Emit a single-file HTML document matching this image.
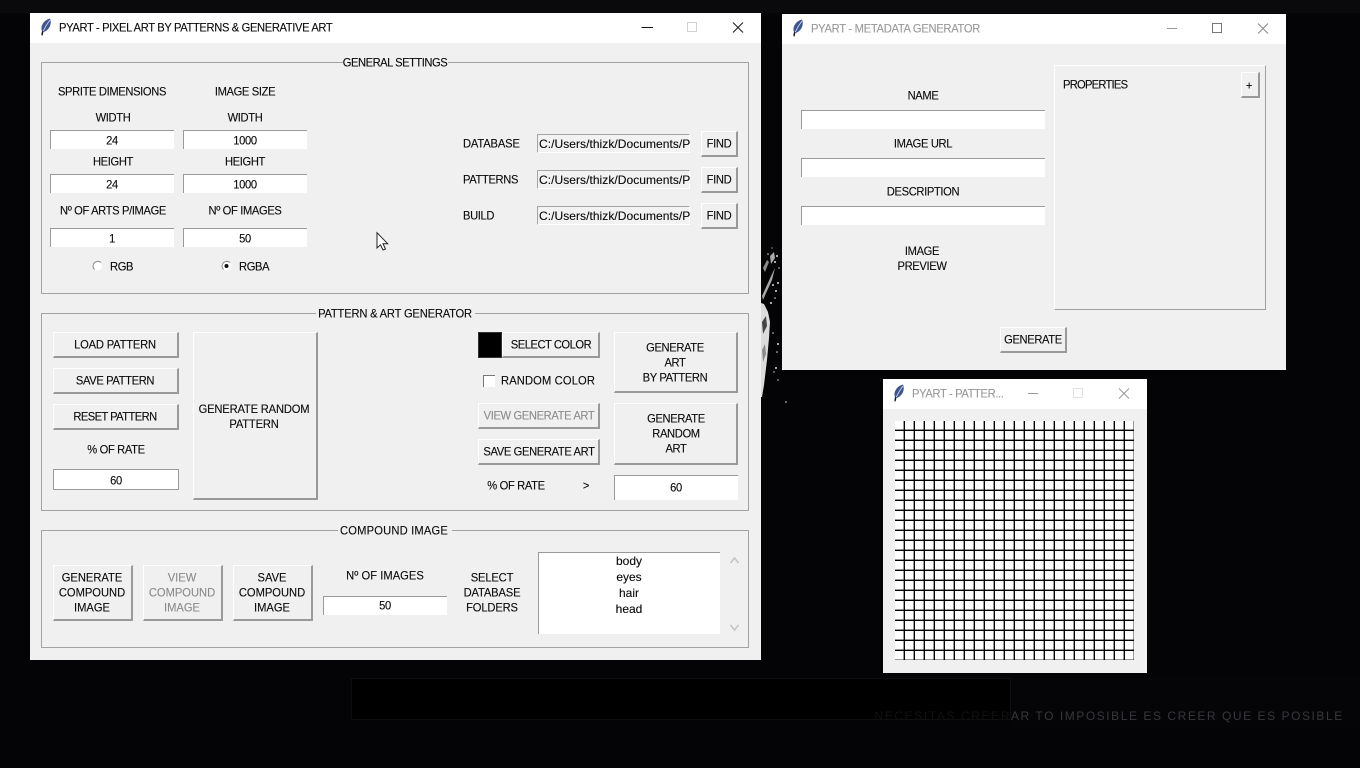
<!DOCTYPE html>
<html><head><meta charset="utf-8"><title>PYART</title>
<style>
html,body{margin:0;padding:0;width:1360px;height:768px;overflow:hidden;background:#040406}
*{box-sizing:border-box}
body{position:relative;font-family:"Liberation Sans",sans-serif;font-size:12px;color:#0a0a0a;-webkit-text-stroke:.12px currentColor}
.a{position:absolute}
.win{position:absolute;background:#f0f0f0}
.bar{position:absolute;left:0;top:0;right:0;height:30px;background:#fff}
.c{position:absolute;margin-top:1px;transform:translate(-50%,-50%) scaleX(.93);white-space:nowrap;letter-spacing:-.38px;line-height:15px;text-align:center}
.n{position:absolute;margin-top:1px;transform:translate(-50%,-50%);white-space:nowrap;line-height:16px;text-align:center}
.l{position:absolute;margin-top:1px;transform-origin:0 50%;transform:translateY(-50%) scaleX(.93);white-space:nowrap;letter-spacing:-.38px;line-height:15px}
.g{color:#8c8c8c}
.grp{position:absolute;border:1px solid #a2a2a2}
.lab{position:absolute;background:#f0f0f0;height:14px}
.e{position:absolute;background:#fff;border-top:1px solid #9a9a9a;border-left:1px solid #9a9a9a}
.p{position:absolute;background:#f2f2f2;border-top:1px solid #a5a5a5;border-left:1px solid #a5a5a5;border-right:1px solid #fff;border-bottom:1px solid #fff}
.b{position:absolute;background:#f0f0f0;border-top:1px solid #fff;border-left:1px solid #fff;border-right:2px solid #999;border-bottom:2px solid #999}
svg{position:absolute;overflow:visible}
</style></head><body>

<!-- background -->
<div class="a" style="left:0;top:0;width:1360px;height:13px;background:#0a0a0c"></div>
<div class="a" style="left:1011px;top:678px;width:349px;height:50px;background:#050508"></div>
<div class="a" style="left:351px;top:678px;width:660px;height:42px;background:#000;border:1px solid #0e0e10"></div>
<svg style="left:0;top:0" width="1360" height="768">
<g fill="#dcdcdc">
<path d="M761 303 L764 304 L768 312 L770 322 L769 338 L767 360 L764 385 L762 397 L761 397Z"/>
<path d="M762 296 L767 285 L773 272 L775 268 L772 280 L767 291 L763 300Z" fill="#a8a8a8"/>
<path d="M763 268 L767 260 L769 262 L765 272Z" fill="#8a8a8a"/>
<path d="M770 256 L774 252 L775 258 L771 264Z" fill="#aaa"/>
<circle cx="777" cy="256" r="1"/><circle cx="775" cy="262" r="1"/><circle cx="778" cy="283" r="1"/><circle cx="776" cy="291" r="1"/>
<circle cx="768" cy="254" r=".8"/><circle cx="772" cy="248" r=".6"/><circle cx="779" cy="268" r=".7"/><circle cx="773" cy="285" r="1"/><circle cx="775" cy="298" r=".8"/><circle cx="771" cy="303" r="1"/>
<circle cx="778" cy="344" r="1"/><circle cx="777" cy="352" r=".8"/><circle cx="776" cy="368" r="1"/><circle cx="786" cy="402" r=".8"/><circle cx="778" cy="380" r=".7"/><circle cx="773" cy="333" r=".8"/><circle cx="774" cy="372" r=".7"/>
</g>
<path d="M762 322 L766 316 L767 326 L763 334Z" fill="#444"/>
<path d="M762 350 L765 344 L766 354 L763 362Z" fill="#888"/>
</svg>
<div class="a" style="left:1011px;top:709px;white-space:nowrap;font-size:12px;letter-spacing:1.55px;color:#38383c;line-height:14px;-webkit-text-stroke:0">AR TO IMPOSIBLE ES CREER QUE ES POSIBLE</div>
<div class="a" style="right:349px;top:709px;white-space:nowrap;font-size:12px;letter-spacing:1.6px;color:#121214;line-height:14px;-webkit-text-stroke:0">NECESITAS CREER</div>

<!-- WINDOW 1 -->
<div class="win" style="left:30px;top:13px;width:731px;height:647px"><div class="bar"></div></div>
<svg style="left:39px;top:18px" width="14" height="18" viewBox="0 0 14 18"><path d="M2 17 L3 13 C1 8 5 2 11 .5 C13 5 11 11 6 13.5 L4 14Z" fill="#3f5590"/><path d="M4 14 C6 9 8 6 11 2" stroke="#d0d8ea" stroke-width=".9" fill="none"/><path d="M3 17.4L4 13" stroke="#111" stroke-width="1.2"/></svg>
<div class="l" style="left:59px;top:27px">PYART - PIXEL ART BY PATTERNS &amp; GENERATIVE ART</div>
<svg style="left:0;top:0" width="1360" height="60"><path d="M641.5 27.5H653" stroke="#111" stroke-width="1"/><rect x="687.5" y="22.5" width="9" height="9" fill="none" stroke="#d0d0d0"/><path d="M733 22.5L743 32.5M743 22.5L733 32.5" stroke="#222" stroke-width="1.1"/></svg>

<div class="grp" style="left:41px;top:62px;width:708px;height:232px"></div>
<div class="lab" style="left:343px;top:55px;width:105px"></div>
<div class="c" style="left:395px;top:62px;letter-spacing:-.5px">GENERAL SETTINGS</div>
<div class="c" style="left:112px;top:91px">SPRITE DIMENSIONS</div>
<div class="c" style="left:245px;top:91px">IMAGE SIZE</div>
<div class="c" style="left:113px;top:117px">WIDTH</div>
<div class="c" style="left:245px;top:117px">WIDTH</div>
<div class="e" style="left:50px;top:130px;width:124px;height:19px"></div><div class="c" style="left:112px;top:140px">24</div>
<div class="e" style="left:183px;top:130px;width:124px;height:19px"></div><div class="c" style="left:245px;top:140px">1000</div>
<div class="c" style="left:113px;top:161px">HEIGHT</div>
<div class="c" style="left:245px;top:161px">HEIGHT</div>
<div class="e" style="left:50px;top:174px;width:124px;height:19px"></div><div class="c" style="left:112px;top:184px">24</div>
<div class="e" style="left:183px;top:174px;width:124px;height:19px"></div><div class="c" style="left:245px;top:184px">1000</div>
<div class="c" style="left:113px;top:210px">Nº OF ARTS P/IMAGE</div>
<div class="c" style="left:245px;top:210px">Nº OF IMAGES</div>
<div class="e" style="left:50px;top:228px;width:124px;height:19px"></div><div class="c" style="left:112px;top:238px">1</div>
<div class="e" style="left:183px;top:228px;width:124px;height:19px"></div><div class="c" style="left:245px;top:238px">50</div>
<svg style="left:0;top:0" width="300" height="300"><circle cx="97.5" cy="266" r="4.5" fill="#fff"/><path d="M94.5 269.5A4.5 4.5 0 0 1 101 262.6" fill="none" stroke="#8a8a8a"/><circle cx="226.5" cy="266" r="4.5" fill="#fff"/><path d="M223.500 269.500A4.500 4.500 0 0 1 230 262.600" fill="none" stroke="#8a8a8a"/><circle cx="226.500" cy="266" r="2" fill="#111"/></svg>
<div class="l" style="left:110px;top:266px">RGB</div>
<div class="l" style="left:239px;top:266px">RGBA</div>

<div class="l" style="left:463px;top:143px;letter-spacing:-.15px">DATABASE</div>
<div class="l" style="left:463px;top:179px">PATTERNS</div>
<div class="l" style="left:463px;top:215px">BUILD</div>
<div class="p" style="left:537px;top:134px;width:153px;height:19px"></div>
<div class="p" style="left:537px;top:170px;width:153px;height:19px"></div>
<div class="p" style="left:537px;top:206px;width:153px;height:19px"></div>
<div class="a" style="left:539px;top:137px;width:151px;height:16px;overflow:hidden;white-space:nowrap;line-height:15px;letter-spacing:.05px">C:/Users/thizk/Documents/Pyart</div>
<div class="a" style="left:539px;top:173px;width:151px;height:16px;overflow:hidden;white-space:nowrap;line-height:15px;letter-spacing:.05px">C:/Users/thizk/Documents/Pyart</div>
<div class="a" style="left:539px;top:209px;width:151px;height:16px;overflow:hidden;white-space:nowrap;line-height:15px;letter-spacing:.05px">C:/Users/thizk/Documents/Pyart</div>
<div class="b" style="left:701px;top:131px;width:37px;height:26px"></div><div class="c" style="left:719px;top:143px">FIND</div>
<div class="b" style="left:701px;top:167px;width:37px;height:26px"></div><div class="c" style="left:719px;top:179px">FIND</div>
<div class="b" style="left:701px;top:203px;width:37px;height:26px"></div><div class="c" style="left:719px;top:215px">FIND</div>

<div class="grp" style="left:41px;top:313px;width:708px;height:198px"></div>
<div class="lab" style="left:316px;top:306px;width:159px"></div>
<div class="c" style="left:395px;top:313px;letter-spacing:-.2px">PATTERN &amp; ART GENERATOR</div>
<div class="b" style="left:53px;top:332px;width:126px;height:26px"></div><div class="c" style="left:115px;top:344px;letter-spacing:-.2px">LOAD PATTERN</div>
<div class="b" style="left:53px;top:368px;width:126px;height:26px"></div><div class="c" style="left:115px;top:380px">SAVE PATTERN</div>
<div class="b" style="left:53px;top:404px;width:126px;height:26px"></div><div class="c" style="left:115px;top:416px;letter-spacing:-.6px">RESET PATTERN</div>
<div class="c" style="left:116px;top:449px">% OF RATE</div>
<div class="a" style="left:53px;top:469px;width:126px;height:21px;background:#fff;border:1px solid #9a9a9a"></div><div class="c" style="left:116px;top:480px">60</div>
<div class="b" style="left:193px;top:332px;width:125px;height:168px"></div>
<div class="c" style="left:254px;top:416px;letter-spacing:-.18px">GENERATE RANDOM<br>PATTERN</div>
<div class="a" style="left:478px;top:332px;width:24px;height:26px;background:#000;border:1px solid #333"></div>
<div class="b" style="left:502px;top:332px;width:98px;height:26px"></div><div class="c" style="left:551px;top:344px;letter-spacing:-.5px">SELECT COLOR</div>
<div class="a" style="left:483px;top:375px;width:12px;height:12px;background:#fff;border-top:1px solid #777;border-left:1px solid #777"></div>
<div class="l" style="left:501px;top:380px;letter-spacing:.15px">RANDOM COLOR</div>
<div class="b" style="left:478px;top:403px;width:122px;height:26px"></div><div class="c g" style="left:539px;top:415px">VIEW GENERATE ART</div>
<div class="b" style="left:478px;top:439px;width:122px;height:26px"></div><div class="c" style="left:539px;top:451px">SAVE GENERATE ART</div>
<div class="b" style="left:614px;top:332px;width:124px;height:61px"></div><div class="c" style="left:675px;top:362px">GENERATE<br>ART<br>BY PATTERN</div>
<div class="b" style="left:614px;top:403px;width:124px;height:62px"></div><div class="c" style="left:676px;top:433px">GENERATE<br>RANDOM<br>ART</div>
<div class="c" style="left:516px;top:485px">% OF RATE</div>
<div class="c" style="left:586px;top:485px">&gt;</div>
<div class="e" style="left:614px;top:475px;width:124px;height:25px"></div><div class="c" style="left:676px;top:487px">60</div>

<div class="grp" style="left:41px;top:530px;width:708px;height:118px"></div>
<div class="lab" style="left:338px;top:523px;width:114px"></div>
<div class="c" style="left:394px;top:530px;letter-spacing:.2px">COMPOUND IMAGE</div>
<div class="b" style="left:53px;top:565px;width:80px;height:56px"></div><div class="c" style="left:92px;top:592px;letter-spacing:0">GENERATE<br>COMPOUND<br>IMAGE</div>
<div class="b" style="left:143px;top:565px;width:80px;height:56px"></div><div class="c g" style="left:182px;top:592px;letter-spacing:0">VIEW<br>COMPOUND<br>IMAGE</div>
<div class="b" style="left:233px;top:565px;width:80px;height:56px"></div><div class="c" style="left:272px;top:592px;letter-spacing:0">SAVE<br>COMPOUND<br>IMAGE</div>
<div class="c" style="left:385px;top:575px;letter-spacing:.05px">Nº OF IMAGES</div>
<div class="e" style="left:323px;top:596px;width:124px;height:19px"></div><div class="c" style="left:385px;top:605px">50</div>
<div class="c" style="left:492px;top:592px;letter-spacing:-.15px">SELECT<br>DATABASE<br>FOLDERS</div>
<div class="e" style="left:538px;top:552px;width:182px;height:82px"></div>
<div class="n" style="left:629px;top:560px">body</div>
<div class="n" style="left:629px;top:576px">eyes</div>
<div class="n" style="left:629px;top:592px">hair</div>
<div class="n" style="left:629px;top:608px">head</div>
<svg style="left:0;top:0" width="760" height="660"><path d="M730.500 563L734.500 558L738.500 563M730.500 625L734.500 630L738.500 625" fill="none" stroke="#c4c4c4" stroke-width="1.500"/></svg>

<!-- cursor -->
<svg style="left:376px;top:232px" width="13" height="19" viewBox="0 0 13 19"><path d="M1 .7V16L4.500 12.800L7 18L9.500 17L7 11.700H11.700Z" fill="#fff" stroke="#222" stroke-width="1"/></svg>

<!-- WINDOW 2 -->
<div class="win" style="left:782px;top:14px;width:504px;height:356px"><div class="bar"></div></div>
<svg style="left:791px;top:19px" width="14" height="18" viewBox="0 0 14 18"><path d="M2 17 L3 13 C1 8 5 2 11 .5 C13 5 11 11 6 13.5 L4 14Z" fill="#3f5590"/><path d="M4 14 C6 9 8 6 11 2" stroke="#d0d8ea" stroke-width=".9" fill="none"/><path d="M3 17.400L4 13" stroke="#111" stroke-width="1.200"/></svg>
<div class="l g" style="left:811px;top:28px;color:#999;letter-spacing:-.3px">PYART - METADATA GENERATOR</div>
<svg style="left:0;top:0" width="1360" height="60"><path d="M1167 28.500H1177" stroke="#999"/><rect x="1212.500" y="23.500" width="9" height="9" fill="none" stroke="#777"/><path d="M1258 23.500L1268 33.500M1268 23.500L1258 33.500" stroke="#888"/></svg>
<div class="c" style="left:923px;top:95px">NAME</div>
<div class="e" style="left:801px;top:110px;width:244px;height:19px"></div>
<div class="c" style="left:923px;top:143px">IMAGE URL</div>
<div class="e" style="left:801px;top:158px;width:244px;height:19px"></div>
<div class="c" style="left:923px;top:191px">DESCRIPTION</div>
<div class="e" style="left:801px;top:206px;width:244px;height:19px"></div>
<div class="c" style="left:922px;top:258px">IMAGE<br>PREVIEW</div>
<div class="a" style="left:1054px;top:65px;width:212px;height:245px;border-top:1px solid #fff;border-left:1px solid #fff;border-right:1px solid #a0a0a0;border-bottom:1px solid #a0a0a0"></div>
<div class="l" style="left:1063px;top:84px;letter-spacing:-.8px">PROPERTIES</div>
<div class="b" style="left:1241px;top:72px;width:19px;height:26px"></div><div class="c" style="left:1249px;top:85px">+</div>
<div class="b" style="left:1000px;top:327px;width:67px;height:26px"></div><div class="c" style="left:1033px;top:339px">GENERATE</div>

<!-- WINDOW 3 -->
<div class="win" style="left:883px;top:379px;width:264px;height:294px"><div class="bar"></div></div>
<svg style="left:892px;top:384px" width="14" height="18" viewBox="0 0 14 18"><path d="M2 17 L3 13 C1 8 5 2 11 .5 C13 5 11 11 6 13.5 L4 14Z" fill="#3f5590"/><path d="M4 14 C6 9 8 6 11 2" stroke="#d0d8ea" stroke-width=".9" fill="none"/><path d="M3 17.400L4 13" stroke="#111" stroke-width="1.200"/></svg>
<div class="l" style="left:912px;top:393px;color:#999">PYART - PATTER...</div>
<svg style="left:0;top:370px" width="1360" height="60"><path d="M1028 23.500H1038" stroke="#999"/><rect x="1073.500" y="18.500" width="9" height="9" fill="none" stroke="#e2e2e2"/><path d="M1119 18.500L1129 28.500M1129 18.500L1119 28.500" stroke="#999"/></svg>
<div class="a" style="left:895px;top:421px;width:239px;height:239px;background-color:#fff;background-image:repeating-linear-gradient(90deg,transparent 0,transparent 8px,rgba(0,0,0,.4) 8px,rgba(0,0,0,.4) 9px,#000 9px,#000 10px),repeating-linear-gradient(180deg,transparent 0,transparent 8px,rgba(0,0,0,.4) 8px,rgba(0,0,0,.4) 9px,#000 9px,#000 10px)"></div>

</body></html>
